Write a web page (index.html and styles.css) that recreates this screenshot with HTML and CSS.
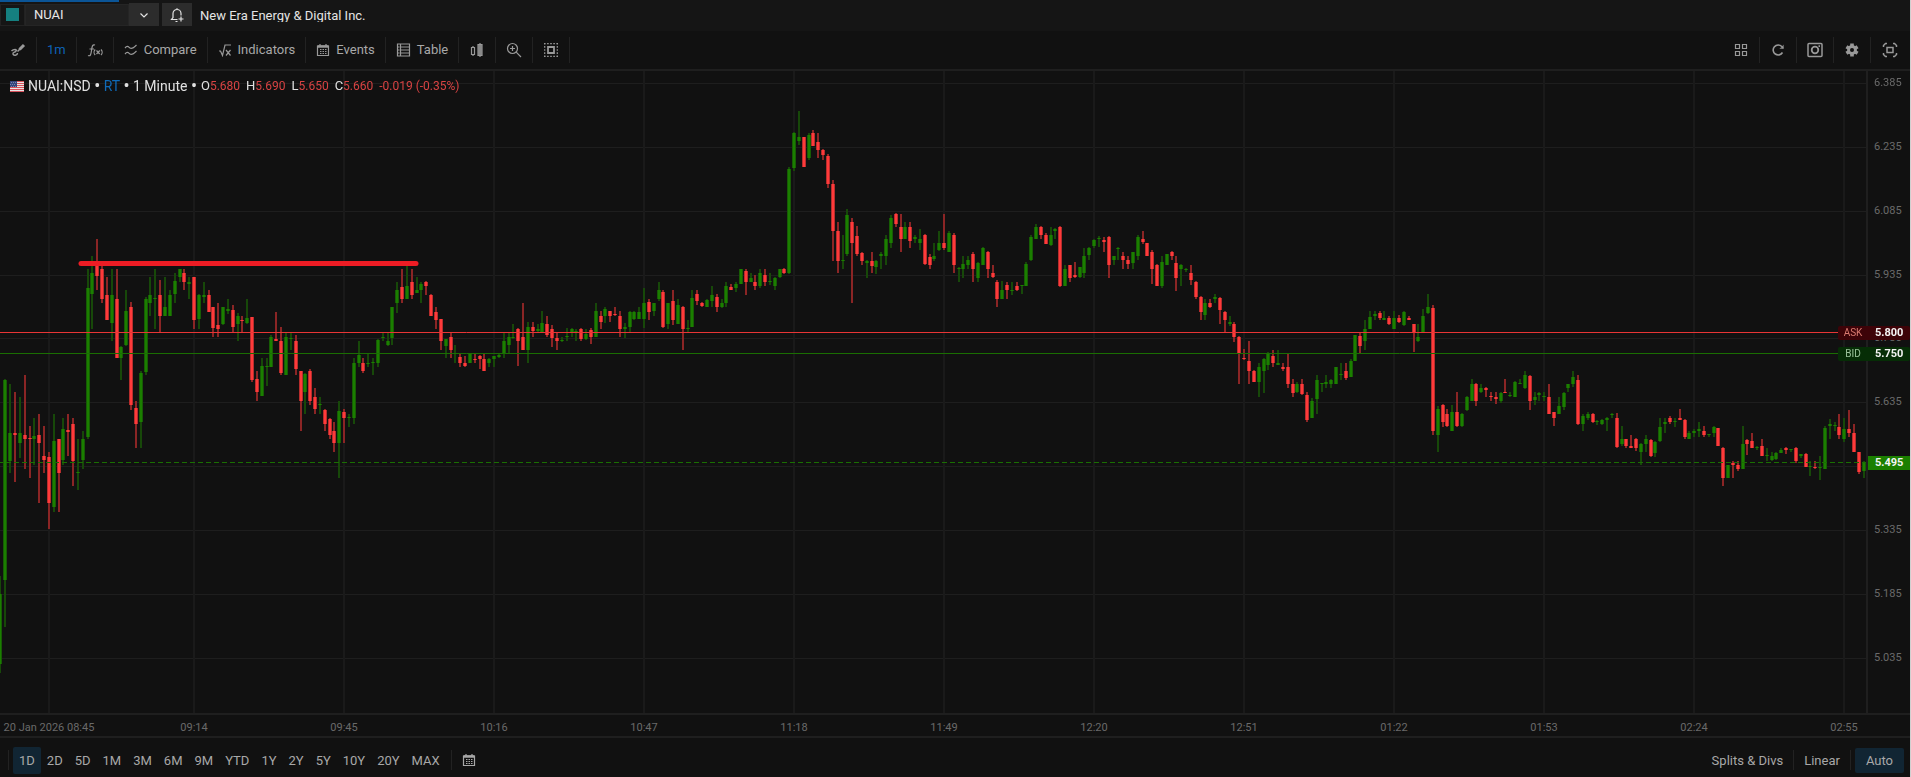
FILE: index.html
```html
<!DOCTYPE html>
<html lang="en">
<head>
  <title>NUAI - New Era Energy &amp; Digital Inc.</title>
  <meta charset="UTF-8">
  <meta name="viewport" content="width=device-width, initial-scale=1.0">
  <link rel="stylesheet" href="styles.css">
</head>
<body>
  <div class="app">
    <header class="titlebar">
      <div class="color-cell"><span class="color-swatch"></span></div>
      <input class="symbol-input" type="text" value="NUAI" aria-label="Symbol">
      <button class="title-btn" aria-label="Symbol list">
        <svg width="10" height="10" viewBox="0 0 10 10"><path d="M1.5 3.5L5 7l3.500-3.500"/></svg>
      </button>
      <button class="title-btn bell" aria-label="Add alert">
        <svg width="16" height="16" viewBox="0 0 16 16"><path d="M8.500 12.500H2.500l1.500-2V6.500a4 4 0 0 1 8 0v2M8 2.500V1.200M6.500 14.500h2M12 9.500v5M9.500 12h5"/></svg>
      </button>
      <span class="company">New Era Energy &amp; Digital Inc.</span>
    </header>

    <nav class="toolbar">
      <button class="tool" aria-label="Draw">
        <svg width="16" height="16" viewBox="0 0 16 16"><path d="M1.500 9c2-2 6-2 4.500 0s-3.500 1-3 3 4.500 1.500 4.500-1" stroke-width="1.500"/><path d="M9.500 7.500L14 3" stroke-width="3"/><path d="M7.500 9.500l2.500-2.500" stroke-width="1.600"/></svg>
      </button>
      <button class="tool interval">1m</button>
      <button class="tool" aria-label="Functions">
        <svg width="16" height="16" viewBox="0 0 16 16"><path d="M1 13.500c2.500 1 3-1 3.500-5S5.500 2 8 3M2.500 7h4.500M8.200 7.500c-1.500 1.500-1.500 4 0 5.500M14 7.500c1.500 1.500 1.500 4 0 5.500M9.500 8.500l3.200 3.500M12.800 8.500L9.500 12"/></svg>
      </button>
      <button class="tool">
        <svg width="14" height="14" viewBox="0 0 14 14"><path d="M1 5c2.500-3 3.500-1 5 0s3 .5 6.500-3M1 11c2.500-3 3.500-1 5 0s3 .5 6.500-3"/></svg>
        Compare
      </button>
      <button class="tool">
        <svg width="14" height="14" viewBox="0 0 14 14"><path d="M1 8h1.500l2 4.500L7 2h6M8 7l4.500 5.500M12.500 7L8 12.500"/></svg>
        Indicators
      </button>
      <button class="tool">
        <svg width="14" height="14" viewBox="0 0 14 14"><path d="M1.500 3h11v9.500h-11zM4 1v2M10 1v2"/><path d="M1.500 3.500h11" stroke-width="2.500"/><path d="M4 6.500h6.500M4 8.500h6.500M4 10.500h6.500" stroke-dasharray="1.500 1"/></svg>
        Events
      </button>
      <button class="tool">
        <svg width="15" height="14" viewBox="0 0 15 14"><path d="M1.500 1h12v12h-12zM4.500 1v12M5 4h8.500M5 7h8.500M5 10h8.500M1.500 4h2M1.500 7h2M1.500 10h2"/></svg>
        Table
      </button>
      <button class="tool" aria-label="Chart type">
        <svg width="16" height="16" viewBox="0 0 16 16"><path d="M2.500 5.500h3v7h-3zM4 4v1.500M4 12.500V14M11 1v14"/><path class="solid" d="M9 2.500h4v11H9z"/></svg>
      </button>
      <button class="tool" aria-label="Zoom in">
        <svg width="16" height="16" viewBox="0 0 16 16"><circle cx="6.500" cy="6.500" r="5"/><path d="M10.200 10.200L15 15M6.500 4v5M4 6.500h5"/></svg>
      </button>
      <button class="tool" aria-label="Select area">
        <svg width="16" height="16" viewBox="0 0 16 16"><path d="M1 1.700h14M1 14.300h14M1.700 1v14M14.300 1v14" stroke-dasharray="1.600 1.500"/><path d="M5 5h6v6H5z" stroke-width="1.800"/></svg>
      </button>

      <button class="tool first-right" aria-label="Layout">
        <svg width="14" height="14" viewBox="0 0 14 14"><path d="M1.500 1.500h4v4h-4zM8.500 1.500h4v4h-4zM1.500 8.500h4v4h-4zM8.500 8.500h4v4h-4z"/></svg>
      </button>
      <button class="tool" aria-label="Refresh">
        <svg width="14" height="14" viewBox="0 0 14 14"><path d="M11.500 9.500A5 5 0 1 1 10.800 3.500L12 5" stroke-width="1.600"/><path class="solid" d="M12.800 1.500v4.500H8.300z" stroke="none"/></svg>
      </button>
      <button class="tool" aria-label="Screenshot">
        <svg width="16" height="16" viewBox="0 0 16 16"><rect x="1" y="1.500" width="14" height="13" rx="1" stroke-width="1.500"/><circle cx="8" cy="8" r="3.300" stroke-width="1.800"/><path d="M11.500 4.200h1.500" stroke-width="1.800"/></svg>
      </button>
      <button class="tool" aria-label="Settings">
        <svg width="16" height="16" viewBox="0 0 16 16"><path d="M8 1.500v13M2.400 4.700l11.200 6.600M2.400 11.300l11.200-6.600" stroke-width="3.600"/><circle cx="8" cy="8" r="3.500" stroke-width="2.800"/><circle class="hole" cx="8" cy="8" r="2"/></svg>
      </button>
      <button class="tool" aria-label="Full screen">
        <svg width="16" height="16" viewBox="0 0 16 16"><path d="M1.500 5V3.500l2-2H5M11 1.500h1.500l2 2V5M14.500 11v1.500l-2 2H11M5 14.500H3.500l-2-2V11" stroke-width="1.500"/><path d="M5 5.500h6v5H5z" stroke-width="1.500"/></svg>
      </button>
    </nav>

    <main class="chart">
      <div class="plot" id="plot">
        <canvas id="canvas"></canvas>
        <div class="legend">
          <svg class="flag" width="14" height="11" viewBox="0 0 14 11"><path fill="#e8e4e4" d="M0 0h14v11H0z"/><path stroke="#d8525c" d="M0 .5h14M0 2.500h14M0 4.500h14M0 6.500h14M0 8.500h14M0 10.500h14"/><path fill="#36467c" d="M0 0h7v6H0z"/><path stroke="#7684b0" stroke-dasharray="1 1" d="M1 1.500h5M0 3.500h6M1 5.500h5"/></svg>
          <span class="legend-name">NUAI:NSD <i>•</i> <span class="rt">RT</span> <i>•</i> 1 Minute <i>•</i></span>
          <span class="ohlc">O<b>5.680</b></span>
          <span class="ohlc">H<b>5.690</b></span>
          <span class="ohlc">L<b>5.650</b></span>
          <span class="ohlc">C<b>5.660</b></span>
          <span class="ohlc"><b>-0.019 (-0.35%)</b></span>
        </div>
      </div>
      <div class="price-axis" id="priceAxis"></div>
    </main>
    <div class="time-axis" id="timeAxis"></div>

    <footer class="bottombar">
      <div class="ranges">
        <button class="range active">1D</button>
        <button class="range">2D</button>
        <button class="range">5D</button>
        <button class="range">1M</button>
        <button class="range">3M</button>
        <button class="range">6M</button>
        <button class="range">9M</button>
        <button class="range">YTD</button>
        <button class="range">1Y</button>
        <button class="range">2Y</button>
        <button class="range">5Y</button>
        <button class="range">10Y</button>
        <button class="range">20Y</button>
        <button class="range">MAX</button>
      </div>
      <button class="calendar" aria-label="Pick dates">
        <svg width="14" height="14" viewBox="0 0 14 14"><path d="M1.500 3h11v9.500h-11zM4 1v2M10 1v2"/><path d="M1.500 3.500h11" stroke-width="2.500"/><path d="M4 6.500h6.500M4 8.500h6.500M4 10.500h6.500" stroke-dasharray="1.500 1"/></svg>
      </button>
      <div class="scale-options">
        <button class="option">Splits &amp; Divs</button>
        <button class="option">Linear</button>
        <button class="option active">Auto</button>
      </div>
    </footer>
  </div>

  <script src="chart.js"></script>
</body>
</html>
```

FILE: chart.js
```js
// one bar = direction + high, body top, body bottom, low
// the numbers are plot units counted down from the top, see unitOf()
const BARS = `
g576,594,664,673 g379,380,580,627 g384,433,461,473 r392,433,435,482 g397,433,443,458
r375,435,439,469 r426,438,439,478 g418,436,439,465 r414,435,443,503 r426,456,460,473
r452,457,503,529 g414,441,507,512 r439,439,473,512 g418,429,460,465 r414,430,432,456
r418,424,461,486 g439,472,473,490 g431,439,460,469 g269,288,437,439 g256,273,294,329
r239,263,276,290 r263,269,299,303 r277,295,320,320 g269,295,323,341 r269,299,358,358
g346,347,358,380 g290,311,345,346 r302,307,405,410 r401,408,424,448 g371,373,422,448
g297,299,372,375 g277,295,303,316 g269,298,299,329 r280,295,316,332 g277,307,316,316
g290,295,316,316 g273,281,294,303 g269,269,277,282 r269,273,282,290 g277,282,284,299
r277,277,320,329 g294,295,319,329 g282,295,297,303 r290,295,312,312 r307,307,328,337
r303,325,329,337 g307,307,324,325 g299,309,311,314 r305,310,327,332 g313,316,324,341
r316,320,321,332 g299,318,323,324 r317,317,380,382 r371,379,392,401 g358,366,396,396
g358,366,367,386 g335,337,367,367 r312,339,341,341 r327,341,373,375 g333,337,375,375
g333,338,339,350 r335,341,369,375 r371,371,401,431 g373,374,392,414 r369,371,401,405
r388,397,409,414 g397,404,405,414 r409,410,424,431 r418,419,435,439 r422,431,443,452
g401,411,443,478 r409,412,418,443 g414,417,418,427 g358,363,418,424 g341,355,363,367
r358,363,371,373 g354,363,364,367 g358,362,363,375 g339,340,363,367 g333,337,338,341
g333,341,345,346 g307,307,338,345 g282,290,303,313 r269,287,299,303 g265,286,299,299
r269,282,295,299 g277,290,293,293 g282,284,290,303 r281,282,286,295 r294,295,316,316
r307,312,320,329 r319,319,341,350 g339,339,346,358 r333,337,350,358 g345,353,354,363
r354,357,363,367 r356,363,366,367 g354,354,363,363 r354,359,360,363 r355,356,359,369
r354,359,371,371 g358,359,363,367 g356,356,359,367 g354,355,357,358 g333,341,354,358
g333,337,345,354 g324,337,338,339 r328,329,341,366 r303,337,350,350 g322,327,350,363
r322,327,331,337 g324,329,331,333 g311,323,332,333 r316,324,335,337 r325,329,338,347
r333,338,341,350 g337,340,341,342 g328,336,337,341 g328,329,332,337 g329,331,333,341
r328,329,339,341 g329,334,339,340 r328,330,337,344 g303,311,337,337 r311,316,322,329
g307,309,316,323 r311,311,316,322 r307,314,315,316 r311,316,329,337 g323,327,329,338
g311,312,327,332 g311,312,319,320 g307,312,319,319 g288,303,319,328 r299,302,312,320
g303,303,311,316 g282,290,299,301 r290,292,327,328 g303,303,324,329 r290,301,320,325
g299,305,324,324 r306,307,329,350 g320,328,329,333 g290,298,327,327 r290,294,301,305
r302,303,306,307 g299,300,307,307 g286,295,301,307 r294,297,307,312 g299,303,307,308
g282,286,303,307 r284,287,290,290 g282,284,288,292 g269,269,284,284 r269,271,282,295
g273,278,282,282 r275,282,286,290 g269,273,286,288 r269,275,282,286 g273,281,282,285
g277,278,286,290 g269,269,277,278 r268,269,273,274 g167,169,273,274 g132,133,168,171
g111,137,141,145 r137,137,167,167 g133,135,158,160 r130,133,146,146 r133,142,150,158
r149,150,155,160 r154,156,184,188 r180,184,231,261 r222,231,261,273 g235,260,261,269
g209,215,254,256 r218,222,243,303 r226,236,254,256 r252,253,261,265 g260,261,263,278
r252,261,266,273 g260,261,267,274 g252,254,256,269 g235,239,256,265 g215,218,243,248
r213,214,224,227 r214,227,239,252 g222,227,239,239 r222,227,241,248 g235,237,239,243
g229,239,243,250 r234,235,264,265 r254,257,265,269 g243,256,259,261 g231,243,250,251
r214,243,248,250 g231,233,252,252 r233,235,265,273 g267,268,269,282 g256,264,269,278
g256,260,265,269 r252,254,269,282 g262,263,278,282 g247,248,265,265 r251,252,269,278
r265,273,277,278 r280,282,299,307 g281,290,299,299 r282,285,290,299 g282,290,291,295
r282,286,290,291 g285,285,286,294 g262,264,286,286 g235,237,260,261 g224,227,239,239
r226,227,235,239 r233,235,244,244 g227,235,245,246 g228,229,231,239 r226,227,286,287
g265,269,286,286 r265,265,278,282 r262,275,277,278 g267,267,277,278 g248,256,273,278
g247,248,255,260 g239,240,246,248 g236,238,239,247 r237,240,242,252 r236,237,265,278
g256,256,260,265 g247,248,249,260 r252,256,260,269 r256,260,264,269 g252,252,263,269
g235,237,256,260 r231,239,242,244 r243,243,256,256 r250,252,269,284 r264,265,286,286
g256,262,286,288 g254,254,265,265 r251,252,256,260 r256,263,278,291 g264,265,269,286
g268,269,270,272 r265,273,280,285 r281,282,297,299 r296,297,312,320 g299,303,315,320
r299,303,307,308 g294,297,299,303 r297,298,310,324 r311,312,320,332 g316,322,324,326
r322,324,337,342 r336,337,353,384 r349,358,359,360 r341,361,371,384 r370,371,382,382
g363,367,382,397 g358,359,371,393 g352,354,365,370 r350,356,363,367 g350,363,365,365
r363,367,369,371 r354,367,384,388 r379,384,393,397 g382,384,392,393 r379,384,394,395
r392,395,420,422 g398,401,418,418 g375,380,399,414 g383,383,384,392 g375,382,384,388
g379,380,384,388 g367,367,384,384 g363,374,375,380 r363,371,378,380 g359,361,377,377
g335,335,361,361 r332,336,346,354 g320,329,341,350 g311,317,329,329 g311,314,316,320
r311,313,318,320 g311,318,320,320 r316,318,324,325 g311,318,329,329 r315,318,322,323
g311,312,325,326 r316,318,320,320 r324,324,332,352 g324,337,341,342 g309,316,332,332
g294,307,313,314 r305,308,431,435 g406,409,435,452 r404,405,422,427 r409,414,426,427
g405,412,431,431 r392,412,426,427 g413,414,426,427 g396,397,410,411 g379,384,401,401
r383,384,401,406 g384,388,392,393 r387,388,390,397 r392,396,397,401 r392,397,399,404
g392,393,401,403 r379,392,393,393 g392,395,396,397 g381,382,397,397 g379,383,384,384
g371,375,388,389 r375,376,401,410 g392,397,400,405 g392,393,395,401 g392,396,397,401
r384,397,414,414 r412,412,418,426 g397,406,414,414 g392,393,407,410 g384,384,388,392
g371,377,384,387 r375,380,424,425 g414,416,424,431 g412,414,418,420 r413,414,422,423
g420,421,422,425 g419,420,424,425 g417,418,420,431 g413,414,415,418 r413,418,447,448
g426,439,444,446 r439,439,446,448 r435,446,448,448 r438,439,448,451 g443,444,452,465
g435,439,444,452 r439,440,456,457 g441,442,453,457 g418,427,441,442 g418,422,424,433
r416,418,422,424 g418,421,422,427 r409,418,420,420 r419,420,437,439 g431,433,439,439
g429,431,433,437 g422,429,431,437 r426,431,435,437 g434,434,435,437 g426,427,433,437
r428,428,446,446 r447,448,478,486 g465,465,478,478 r461,463,465,478 r461,465,469,471
g426,444,469,469 r439,440,444,455 r433,441,448,448 g446,447,448,450 r439,446,456,456
g448,455,456,461 g452,456,460,461 g452,453,459,460 g448,450,453,453 r447,448,450,454
g449,449,450,452 r447,448,461,463 g454,454,456,458 r453,454,467,467 g461,466,467,476
r461,467,468,469 g456,467,468,480 g426,428,469,469 g419,424,426,439 g422,425,426,431
r414,427,435,439 g418,429,439,442 r410,429,433,437 r424,433,452,452 r452,452,472,474
g461,462,471,478`.trim().split(/\s+/);

const PRICES = [6.385, 6.235, 6.085, 5.935, 5.785, 5.635, 5.485, 5.335, 5.185, 5.035];
const HIDDEN_LABELS = [5.485];
const TIMES = ['20 Jan 2026 08:45', '09:14', '09:45', '10:16', '10:47', '11:18', '11:49',
  '12:20', '12:51', '01:22', '01:53', '02:24', '02:55'];
const QUOTES = [
  { type: 'ask', label: 'ASK', price: 5.8 },
  { type: 'bid', label: 'BID', price: 5.75 },
  { type: 'last', label: '', price: 5.495 }
];

const TOP = 71;
const BOTTOM = 713;
const BAR_COUNT = 385.6;

const plot = document.getElementById('plot');
const canvas = document.getElementById('canvas');
const priceAxis = document.getElementById('priceAxis');
const timeAxis = document.getElementById('timeAxis');

function unitOf(price) {
  return 83 + (6.385 - price) * 425.8;
}

function draw() {
  const w = plot.clientWidth;
  const h = plot.clientHeight;
  canvas.width = w;
  canvas.height = h;
  const ctx = canvas.getContext('2d');
  const y = (u) => Math.round((u - TOP) * h / (BOTTOM - TOP));
  const x = (i) => Math.round((i + 0.1) * w / BAR_COUNT);

  // grid
  priceAxis.innerHTML = '';
  timeAxis.innerHTML = '';
  PRICES.forEach((p) => {
    const py = y(unitOf(p));
    ctx.fillStyle = '#1e1e1e';
    ctx.fillRect(0, py, w, 1);
    if (!HIDDEN_LABELS.includes(p)) {
      addLabel(priceAxis, 'price', p.toFixed(3), 'top', py);
    }
  });
  TIMES.forEach((t, i) => {
    const px = i === 0 ? x(10) : x(40 + (i - 1) * 31);
    ctx.fillStyle = '#1a1a1a';
    ctx.fillRect(px - 1, 0, 2, h);
    addLabel(timeAxis, 'time', t, 'left', px);
  });

  // candles
  BARS.forEach((bar, i) => {
    const [high, top, bottom, low] = bar.slice(1).split(',').map(Number);
    const green = bar[0] === 'g';
    const cx = x(i);
    const bodyTop = y(top);
    const bodyH = Math.max(1, y(bottom) - bodyTop);
    ctx.fillStyle = green ? '#174809' : '#8b2525';
    ctx.fillRect(cx - 1, y(high), 2, y(low) - y(high));
    ctx.fillStyle = green ? '#175c05' : '#b62d2d';
    ctx.fillRect(cx - 2, bodyTop, 4, bodyH);
    ctx.fillStyle = green ? '#1b7f00' : '#ff3a3a';
    ctx.fillRect(cx - 1, bodyTop, 2, bodyH);
  });

  // resistance line
  ctx.strokeStyle = '#ed1c24';
  ctx.lineWidth = 5;
  ctx.lineCap = 'round';
  ctx.beginPath();
  ctx.moveTo(x(16) + 3, y(263) + 0.5);
  ctx.lineTo(x(86) - 1, y(263) + 0.5);
  ctx.stroke();

  // ask, bid and last price
  ctx.lineCap = 'butt';
  ctx.lineWidth = 1;
  QUOTES.forEach((q) => {
    const py = y(unitOf(q.price));
    ctx.strokeStyle = q.type === 'ask' ? '#e83535' : '#1a6e02';
    ctx.setLineDash(q.type === 'last' ? [5, 3] : []);
    ctx.beginPath();
    ctx.moveTo(q.type === 'last' ? -2 : 0, py + 0.5);
    ctx.lineTo(w, py + 0.5);
    ctx.stroke();
    addTag(q, py + 1);
  });
}

function addLabel(parent, cls, text, side, pos) {
  const el = document.createElement('span');
  el.className = cls;
  el.textContent = text;
  el.style[side] = pos + 'px';
  parent.appendChild(el);
}

function addTag(quote, pos) {
  const el = document.createElement('div');
  el.className = 'tag ' + quote.type;
  el.style.top = pos + 'px';
  if (quote.label) {
    const label = document.createElement('span');
    label.className = 'tag-label';
    label.textContent = quote.label;
    el.appendChild(label);
  }
  const value = document.createElement('span');
  value.className = 'tag-price';
  value.textContent = quote.price.toFixed(3);
  el.appendChild(value);
  priceAxis.appendChild(el);
}

window.addEventListener('resize', draw);
draw();
```

FILE: styles.css
```css
* {
  box-sizing: border-box;
}
body {
  margin: 0;
  background-color: #111;
  color: #a8a8a8;
  font-family: Roboto, "Liberation Sans", sans-serif;
  font-size: 13px;
}
button {
  background: none;
  border: none;
  padding: 0;
  color: inherit;
  font: inherit;
  cursor: pointer;
}
svg {
  display: block;
  flex: none;
  fill: none;
  stroke: currentColor;
  stroke-width: 1.2;
}
.app {
  display: flex;
  flex-direction: column;
  height: 100vh;
  overflow: hidden;
  border-right: 1px solid #d0d0d0;
}

/* symbol bar */
.titlebar {
  position: relative;
  display: flex;
  align-items: center;
  flex: none;
  height: 31px;
  padding-bottom: 2px;
  background-color: #151515;
  color: #e4e4e4;
}
.titlebar::before {
  content: "";
  position: absolute;
  top: 0;
  left: 0;
  width: 119px;
  height: 2px;
  background-color: #0b5597;
}
.color-cell {
  display: flex;
  align-items: center;
  justify-content: center;
  width: 25px;
  height: 22px;
  border: 1px solid #222;
}
.color-swatch {
  width: 13px;
  height: 13px;
  background-color: #158080;
}
.symbol-input {
  width: 104px;
  height: 22px;
  padding: 0 8px 1px;
  border: 1px solid #252525;
  background-color: #202020;
  color: #e8e8e8;
  font: inherit;
}
.title-btn {
  display: flex;
  align-items: center;
  justify-content: center;
  width: 30px;
  height: 23px;
  background-color: #2c2c2c;
}
.bell {
  margin: 0 8px 0 3px;
}
.company {
  height: 14px;
  overflow: hidden;
  line-height: 16px;
  color: #e4e4e4;
}

/* toolbar */
.toolbar {
  display: flex;
  align-items: center;
  flex: none;
  height: 40px;
  padding: 0 2px 1px 0;
  border-bottom: 2px solid #1f1f1f;
}
.tool {
  display: flex;
  align-items: center;
  justify-content: center;
  gap: 6px;
  min-width: 37px;
  height: 26px;
  padding: 0 10px;
  border-right: 1px solid #222;
}
.tool svg {
  opacity: 0.9;
}
.tool:hover {
  color: #fff;
}
.interval {
  color: #0d63b8;
}
.first-right {
  margin-left: auto;
}
.tool:last-child {
  border-right: none;
}
.solid {
  fill: currentColor;
  fill-opacity: 0.7;
}
.hole {
  fill: #111;
  stroke: none;
}

/* chart */
.chart {
  display: flex;
  flex: 1;
  min-height: 0;
}
.plot {
  position: relative;
  flex: 1;
  min-width: 0;
}
.plot canvas {
  position: absolute;
  top: 0;
  left: 0;
}
.legend {
  position: relative;
  display: flex;
  align-items: center;
  padding: 6px 10px;
  line-height: 18px;
  color: #e0e0e0;
}
.flag {
  margin-right: 4px;
  stroke: none;
}
.legend-name {
  margin-right: 4px;
  font-size: 14px;
}
.legend-name i {
  font-size: 18px;
  font-style: normal;
  line-height: 14px;
  vertical-align: -1px;
}
.rt {
  color: #0f6ab8;
}
.ohlc {
  margin-right: 6px;
  font-size: 13px;
}
.ohlc b {
  color: #d84343;
  font-size: 12px;
  font-weight: 400;
}
.price-axis {
  position: relative;
  flex: none;
  width: 44px;
  border-left: 2px solid #1f1f1f;
}
.price {
  position: absolute;
  left: 6px;
  color: #6a6a6a;
  font-size: 11px;
  line-height: 14px;
  transform: translateY(-50%);
}
.tag {
  position: absolute;
  right: 0;
  display: flex;
  height: 14px;
  border-radius: 2px;
  color: #f4f4f4;
  font-size: 11px;
  line-height: 14px;
  transform: translateY(-50%);
}
.tag-label {
  width: 30px;
  text-align: center;
  font-size: 10px;
}
.tag-price {
  width: 42px;
  padding-left: 7px;
  font-weight: 700;
}
.ask {
  background-color: #3d0308;
}
.ask .tag-label {
  color: #d97a70;
}
.bid {
  background-color: #062d06;
}
.bid .tag-label {
  color: #9cc49c;
}
.last {
  border-radius: 0;
  background-color: #1b7f00;
}
.time-axis {
  position: relative;
  flex: none;
  height: 25px;
  border-top: 2px solid #1f1f1f;
  border-bottom: 2px solid #1f1f1f;
}
.time {
  position: absolute;
  top: 6px;
  color: #6a6a6a;
  font-size: 11px;
  line-height: 14px;
  white-space: nowrap;
  transform: translateX(-50%);
}

/* bottom bar */
.bottombar {
  display: flex;
  align-items: center;
  justify-content: space-between;
  flex: none;
  height: 39px;
  padding: 5px 6px 0 8px;
}
.ranges {
  display: flex;
  align-items: center;
  padding: 0 5px 0 4px;
  border-left: 1px solid #222;
  border-right: 1px solid #222;
  height: 20px;
}
.range {
  height: 27px;
  padding: 0 6px;
  border-radius: 2px;
}
.active {
  background-color: #112533;
}
.calendar {
  margin: 0 auto 0 10px;
}
.scale-options {
  display: flex;
  align-items: center;
}
.option {
  height: 20px;
  padding: 0 10px;
  border-right: 1px solid #222;
}
.option.active {
  height: 25px;
  margin-left: 4px;
  padding: 0 11px;
  border-right: none;
  border-radius: 2px;
}
```
